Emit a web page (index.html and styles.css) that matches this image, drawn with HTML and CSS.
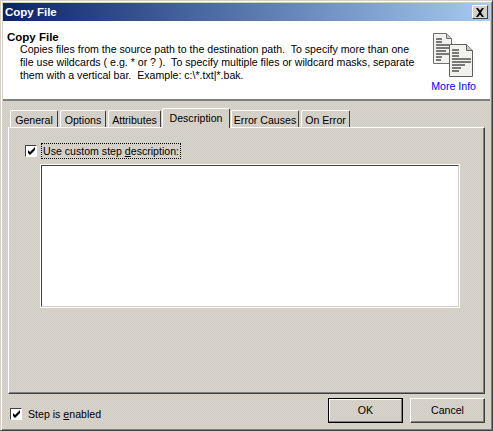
FILE: index.html
```html
<!DOCTYPE html>
<html lang="en">
<head>
    <meta charset="UTF-8">
    <title>Copy File</title>
    <link rel="stylesheet" href="styles.css">
</head>
<body>
<div class="dialog">
    <div class="titlebar">
        <span class="title">Copy File</span>
        <span class="close">
            <svg width="10" height="9" viewBox="0 0 10 9"><path d="M1 0h2l2 2.500 2-2.500h2L6 4.500 9 9H7L5 6.500 3 9H1l3-4.500z" fill="#000"/></svg>
        </span>
    </div>
    <div class="header">
        <div class="info">
            <div class="info-title">Copy File</div>
            <div class="info-text">Copies files from the source path to the destination path.  To specify more than one
file use wildcards ( e.g. * or ? ).  To specify multiple files or wildcard masks, separate
them with a vertical bar.  Example: c:\*.txt|*.bak.</div>
        </div>
        <div class="more">
            <svg class="docs" width="42" height="44" viewBox="0 0 42 44">
                <path d="M.5.500h13l5 5v25H.5z" fill="#f1f1ee" stroke="#707070"/>
                <path d="M13.500.500v5h5" fill="#c8c8c8" stroke="#707070"/>
                <path d="M3 6h6M3 9h6M3 12h13M3 15h13M3 18h10M3 21h13M3 24h6M3 27h5" stroke="#000" fill="none"/>
                <path d="M16.500 11.500h17l6 6v26h-23z" fill="#f1f1ee" stroke="#606060"/>
                <path d="M33.500 11.500v6h6" fill="#c8c8c8" stroke="#606060"/>
                <path d="M19 17h7M19 20h7M19 23h7M19 26h19M19 29h19M19 32h13M19 35h9M19 38h7" stroke="#000" fill="none"/>
            </svg>
            <a class="more-link">More Info</a>
        </div>
    </div>
    <div class="body">
        <div class="tabs">
            <div class="tab t1">General</div>
            <div class="tab t2">Options</div>
            <div class="tab t3">Attributes</div>
            <div class="tab active t4">Description</div>
            <div class="tab t5">Error Causes</div>
            <div class="tab t6">On Error</div>
        </div>
        <div class="pane">
            <div class="check-row">
                <span class="check"><svg width="9" height="9" viewBox="0 0 9 9"><path d="M1 3l2 2 5-5v3L3 8 1 6z" fill="#000"/></svg></span>
                <span class="focus">Use custom step <u>d</u>escription:</span>
            </div>
            <div class="memo"></div>
        </div>
        <div class="footer">
            <div class="enabled">
                <span class="check"><svg width="9" height="9" viewBox="0 0 9 9"><path d="M1 3l2 2 5-5v3L3 8 1 6z" fill="#000"/></svg></span>
                <span>Step is <u>e</u>nabled</span>
            </div>
            <div class="buttons">
                <div class="btn default">OK</div>
                <div class="btn">Cancel</div>
            </div>
        </div>
    </div>
</div>
</body>
</html>
```

FILE: styles.css
```css
html, body {
    margin: 0;
    padding: 0;
}
body {
    font-family: "Liberation Sans", Arial, sans-serif;
    font-size: 10.6px;
    color: #000;
}
u {
    text-underline-offset: 1px;
}
.dialog, .tab.active, .close {
    /* the 16 colour dither of the grey */
    background: repeating-conic-gradient(#d8d5cd 0 25%, #d0cbc3 0 50%) 0 0 / 2px 2px;
}
.dialog {
    width: 493px;
    height: 431px;
    box-sizing: border-box;
    padding: 2px;
    border: 1px solid;
    border-color: #d4d0c8 #404040 #404040 #d4d0c8;
    box-shadow: inset 1px 1px 0 #fff, inset -1px -1px 0 #808080;
    display: flex;
    flex-direction: column;
}
.titlebar {
    height: 18px;
    flex: none;
    display: flex;
    align-items: center;
    justify-content: space-between;
    padding: 0 2px;
    background: linear-gradient(to right, #0a246a, #a6caf0);
    color: #fff;
    font-size: 11.5px;
    font-weight: bold;
}
.close {
    width: 16px;
    height: 14px;
    box-sizing: border-box;
    display: flex;
    align-items: center;
    justify-content: center;
    border: 1px solid;
    border-color: #fff #404040 #404040 #fff;
}
.header {
    height: 80px;
    flex: none;
    box-sizing: border-box;
    display: flex;
    justify-content: space-between;
    padding: 10px 14px 0 4px;
    background: #fff;
    border-bottom: 2px solid #808080;
}
.info-title {
    font-size: 11.5px;
    font-weight: bold;
    line-height: 12px;
}
.info-text {
    padding-left: 13px;
    line-height: 13px;
    white-space: pre;
}
.more {
    display: flex;
    flex-direction: column;
    align-items: center;
}
.docs {
    margin-top: 2px;
}
.more-link {
    color: #0000ff;
    margin-top: 3px;
    line-height: 13px;
}
.body {
    flex: 1;
    display: flex;
    flex-direction: column;
    padding: 6px 5px 0;
}
.tabs {
    height: 20px;
    flex: none;
    display: flex;
    align-items: flex-end;
    padding-left: 2px;
    gap: 2px;
}
.tab {
    height: 17px;
    box-sizing: border-box;
    line-height: 18px;
    text-align: center;
    border: 1px solid;
    border-bottom: 0;
    border-color: #fff #404040 #fff #fff;
    border-radius: 2px 2px 0 0;
}
.tab.active {
    height: 20px;
    margin: 0 -1px -1px;
    line-height: 18px;
    position: relative;
    z-index: 1;
}
.t1 { width: 48px; }
.t2 { width: 46px; }
.t3 { width: 53px; }
.t4 { width: 68px; }
.t5 { width: 68px; }
.t6 { width: 49px; }
.pane {
    height: 267px;
    flex: none;
    box-sizing: border-box;
    padding: 15px 24px 0 16px;
    border: 1px solid;
    border-color: #fff #404040 #404040 #fff;
    box-shadow: inset -1px -1px 0 #808080;
}
.check-row {
    display: flex;
    align-items: center;
    gap: 4px;
    height: 16px;
}
.check {
    width: 12px;
    height: 12px;
    flex: none;
    box-sizing: border-box;
    display: flex;
    align-items: center;
    justify-content: center;
    background: #fff;
    border: 1px solid;
    border-color: #404040 #fff #fff #404040;
}
.focus {
    padding: 0 1px;
    line-height: 14px;
    border: 1px dotted #000;
}
.memo {
    height: 144px;
    margin: 5px 0 0 15px;
    background: #fff;
    box-sizing: border-box;
    border: 2px solid;
    border-color: #404040 #d4d0c8 #d4d0c8 #404040;
    outline: 1px solid #fff;
    outline-offset: -1px;
}
.footer {
    flex: 1;
    display: flex;
    justify-content: space-between;
    align-items: flex-start;
    padding-top: 4px;
}
.enabled {
    display: flex;
    align-items: center;
    gap: 6px;
    margin: 10px 0 0 2px;
}
.buttons {
    display: flex;
    gap: 7px;
}
.btn {
    width: 75px;
    height: 25px;
    box-sizing: border-box;
    line-height: 23px;
    text-align: center;
    border: 1px solid;
    border-color: #fff #404040 #404040 #fff;
    box-shadow: inset -1px -1px 0 #808080;
}
.btn.default {
    border: 1px solid #000;
    box-shadow: inset -1px -1px 0 #808080, inset 1px 1px 0 #fff;
}
```
